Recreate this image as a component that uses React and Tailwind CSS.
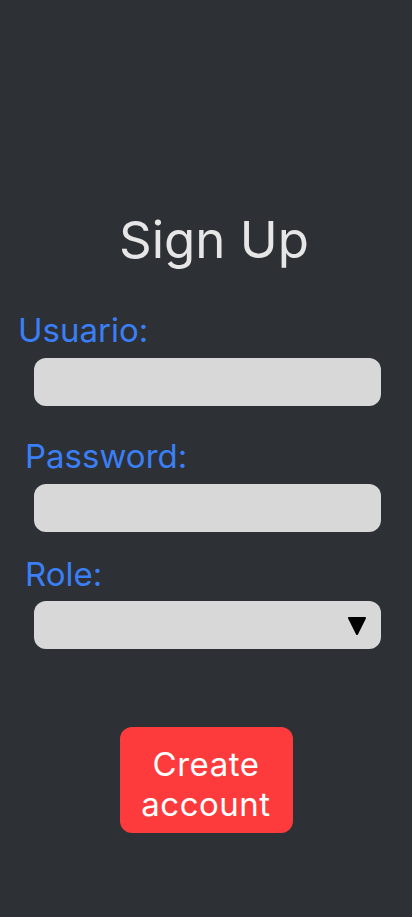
export default function App() {
  return (
    <div className="min-h-[917px] w-full bg-[#2d3035]" style={{ fontFamily: "Inter, 'Open Sans', sans-serif" }}>
      <div className="flex flex-col pt-[212px]">
        <h1 className="pl-[16px] text-center text-[51px] leading-[56px] text-[#e6e6e6]">Sign Up</h1>
        <div className="mt-[44px] pl-[18px] text-[33px] leading-[36px] text-[#3a7ff6]">Usuario:</div>
        <div className="mt-[10px] ml-[34px] h-[48px] w-[347px] rounded-[12px] bg-[#d8d8d8]"></div>
        <div className="mt-[32px] pl-[25px] text-[33px] leading-[36px] text-[#3a7ff6]">Password:</div>
        <div className="mt-[10px] ml-[34px] h-[48px] w-[347px] rounded-[12px] bg-[#d8d8d8]"></div>
        <div className="mt-[24px] pl-[25px] text-[33px] leading-[36px] text-[#3a7ff6]">Role:</div>
        <div className="mt-[9px] ml-[34px] flex h-[48px] w-[347px] items-center justify-end rounded-[12px] bg-[#d8d8d8] pr-[14px]">
          <svg width="20" height="22" viewBox="0 0 20 22">
            <polygon points="2,4 18,4 10,20" fill="#000" stroke="#000" strokeWidth="2" strokeLinejoin="round" />
          </svg>
        </div>
        <div className="mt-[78px] flex justify-center">
          <button className="flex h-[106px] w-[173px] flex-col items-center justify-center rounded-[12px] bg-[#fd3b3d] pt-[7px] text-[33px] leading-[40px] tracking-[0.5px] text-white">
            <span>Create</span>
            <span>account</span>
          </button>
        </div>
      </div>
    </div>
  );
}
